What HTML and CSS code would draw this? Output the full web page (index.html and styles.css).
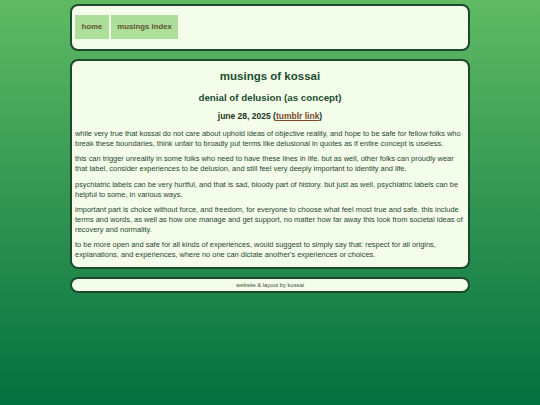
FILE: index.html
```
<!DOCTYPE html>
<html>
<head>
<meta charset="utf-8">
<link rel="stylesheet" href="styles.css">
</head>
<body>
<div class="page">
  <header class="box header">
    <nav class="nav">
      <a class="navbtn" href="#">home</a>
      <a class="navbtn" href="#">musings index</a>
    </nav>
  </header>
  <main class="box main">
    <h1 class="title">musings of kossai</h1>
    <h2 class="subtitle">denial of delusion (as concept)</h2>
    <p class="date">june 28, 2025 (<a class="link" href="#">tumblr link</a>)</p>
    <p class="para">while very true that kossai do not care about uphold ideas of objective reality, and hope to be safe for fellow folks who break these boundaries, think unfair to broadly put terms like delusional in quotes as if entire concept is useless.</p>
    <p class="para">this can trigger unreality in some folks who need to have these lines in life. but as well, other folks can proudly wear that label, consider experiences to be delusion, and still feel very deeply important to identity and life.</p>
    <p class="para">psychiatric labels can be very hurtful, and that is sad, bloody part of history. but just as well, psychiatric labels can be helpful to some, in various ways.</p>
    <p class="para">important part is choice without force, and freedom, for everyone to choose what feel most true and safe. this include terms and words, as well as how one manage and get support, no matter how far away this look from societal ideas of recovery and normality.</p>
    <p class="para">to be more open and safe for all kinds of experiences, would suggest to simply say that: respect for all origins, explanations, and experiences, where no one can dictate another's experiences or choices.</p>
  </main>
  <footer class="box footer">website &amp; layout by kossai</footer>
</div>
</body>
</html>
```
FILE: styles.css
```
html, body {
  margin: 0;
  padding: 0;
}
body {
  min-height: 405px;
  background: linear-gradient(to bottom, #60ba64 0%, #20874b 69%, #037040 100%);
  font-family: "Liberation Sans", Arial, sans-serif;
  color: #2b4634;
}
.page {
  width: 400px;
  margin: 0 auto;
  padding-top: 4px;
  display: flex;
  flex-direction: column;
  gap: 8px;
}
.box {
  background: #f3fde9;
  border: 2px solid #1d4a2e;
  border-radius: 8px;
  box-sizing: border-box;
}
.header {
  height: 47px;
  padding: 9px 3px 0 3px;
}
.nav {
  display: flex;
  gap: 2px;
}
.navbtn {
  display: block;
  height: 24px;
  line-height: 24px;
  padding: 0 6.5px;
  background: #addf9a;
  color: #5e5230;
  font-weight: bold;
  font-size: 7.8px;
  text-decoration: none;
}
.main {
  height: 210px;
  padding: 8px 3px 0 3px;
}
.title {
  margin: 0;
  font-size: 11.5px;
  line-height: 14px;
  text-align: center;
  color: #1d4d30;
}
.subtitle {
  margin: 9px 0 0 0;
  font-size: 9.75px;
  line-height: 12px;
  text-align: center;
  color: #1d4d30;
}
.date {
  margin: 7px 0 0 0;
  font-size: 8.5px;
  line-height: 10px;
  font-weight: bold;
  text-align: center;
  color: #1c3626;
}
.link {
  color: #7a4a28;
  text-decoration: underline;
}
.para {
  margin: 6px 0 0 0;
  font-size: 7.45px;
  line-height: 9.7px;
  color: #2b4634;
}
.date + .para {
  margin-top: 8px;
}
.footer {
  height: 16px;
  line-height: 12px;
  font-size: 5.8px;
  text-align: center;
  color: #3b4f42;
}
```
